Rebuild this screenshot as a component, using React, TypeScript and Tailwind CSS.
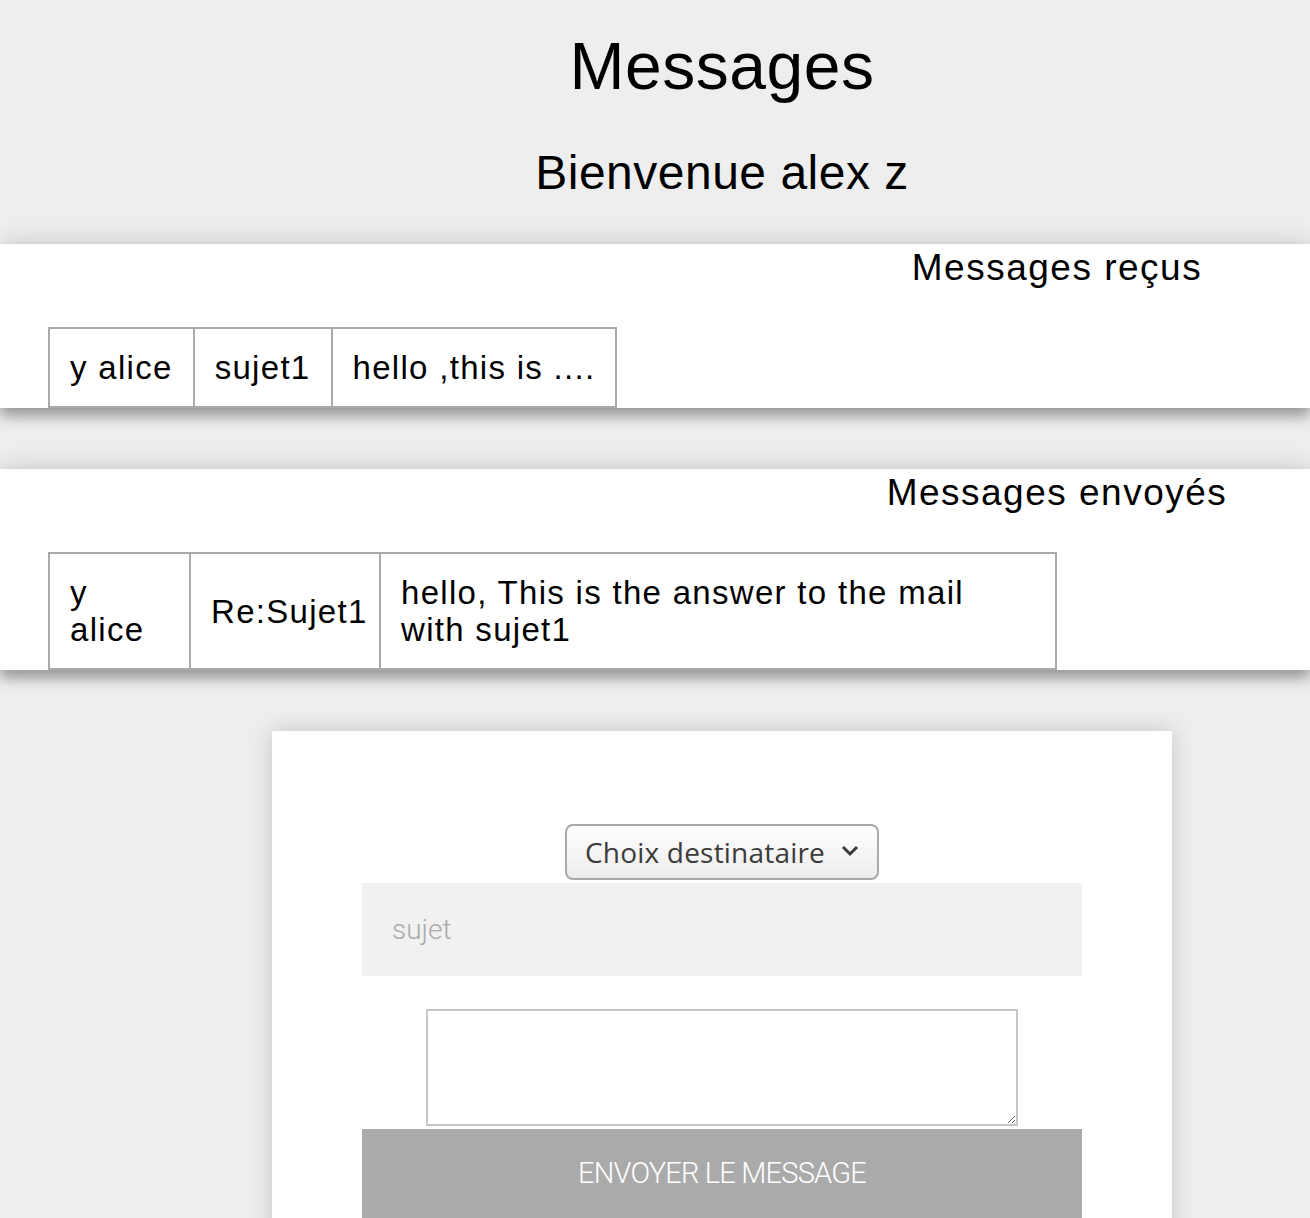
import React from 'react';

const received = [{ from: 'y alice', subject: 'sujet1', body: 'hello ,this is ....' }];
const sent = [{ from: 'y alice', subject: 'Re:Sujet1', body: 'hello, This is the answer to the mail with sujet1' }];

const cell = 'border-2 border-[#aaaaaa] px-[20px] py-[20px] align-middle text-left font-normal';

const Band = ({ title, children }: { title: string; children: React.ReactNode }) => (
    // bande blanche pleine largeur avec ombre
    <section className="bg-white pl-[48px] shadow-[0_8px_12px_rgba(0,0,0,0.3),0_0_26px_rgba(0,0,0,0.16)]">
        <h3 className="ml-auto w-[506px] pt-1 text-center text-[37px] leading-[40px] tracking-[1.5px] text-black mb-[39px]">
            {title}
        </h3>
        {children}
    </section>
);

export default function App() {
    return (
        <div className="min-h-screen bg-[#eeeeee] pb-10 font-['Liberation_Sans',Arial,sans-serif] text-black">
            <div className="pl-[134px] text-center">
                <h1 className="pt-[28px] text-[66px] leading-[76px] tracking-[0.5px]">Messages</h1>
                <h2 className="mt-[40px] text-[48px] leading-[58px] tracking-[0.5px]">Bienvenue alex z</h2>
            </div>

            <div className="mt-[42px]">
                <Band title="Messages reçus">
                    <table className="border-collapse text-[33px] leading-[37px] tracking-[1.3px]">
                        <tbody>
                            {received.map((m) => (
                                <tr key={m.subject}>
                                    <td className={`${cell} whitespace-nowrap`}>{m.from}</td>
                                    <td className={`${cell} whitespace-nowrap`}>{m.subject}</td>
                                    <td className={`${cell} whitespace-nowrap`}>{m.body}</td>
                                </tr>
                            ))}
                        </tbody>
                    </table>
                </Band>
            </div>

            <div className="mt-[61px]">
                <Band title="Messages envoyés">
                    <table className="w-[1009px] table-fixed border-collapse text-[33px] leading-[37px] tracking-[1.3px]">
                        <colgroup>
                            <col className="w-[141px]" />
                            <col className="w-[190px]" />
                            <col />
                        </colgroup>
                        <tbody>
                            {sent.map((m) => (
                                <tr key={m.subject}>
                                    <td className={cell}>{m.from}</td>
                                    <td className={`${cell} whitespace-nowrap`}>{m.subject}</td>
                                    <td className={cell}>{m.body}</td>
                                </tr>
                            ))}
                        </tbody>
                    </table>
                </Band>
            </div>

            <div className="pl-[134px] mt-[61px]">
                <form className="mx-auto flex w-[900px] flex-col items-center bg-white pt-[93px] pb-[80px] shadow-[0_0_22px_rgba(0,0,0,0.18)]">
                    <div className="relative">
                        <select
                            defaultValue=""
                            className="h-[56px] w-[314px] appearance-none rounded-[8px] border-2 border-[#a9a9a9] bg-gradient-to-b from-white to-[#ececec] pl-[18px] font-['Open_Sans',sans-serif] text-[28px] text-[#3b3b3b] tracking-[0.2px]"
                        >
                            <option value="">Choix destinataire</option>
                            <option value="alice">y alice</option>
                        </select>
                        <svg
                            className="pointer-events-none absolute right-[20px] top-[21px]"
                            width="18"
                            height="12"
                            viewBox="0 0 18 12"
                            fill="none"
                        >
                            <polyline points="2,2 9,9 16,2" stroke="#3b3b3b" strokeWidth="3" />
                        </svg>
                    </div>

                    <input
                        placeholder="sujet"
                        className="mt-[3px] h-[93px] w-[720px] bg-[#f1f1f1] px-[30px] font-['Roboto',sans-serif] text-[28px] font-light text-[#555] outline-none placeholder:text-[#aaaaaa]"
                    />

                    <textarea className="mt-[33px] h-[117px] w-[592px] border-2 border-[#c6c6c6] bg-white" />

                    <button
                        type="button"
                        className="mt-[3px] h-[90px] w-[720px] bg-[#aaaaaa] font-['Roboto',sans-serif] text-[29px] font-light uppercase tracking-[-0.8px] text-white"
                    >
                        Envoyer le message
                    </button>
                </form>
            </div>
        </div>
    );
}
